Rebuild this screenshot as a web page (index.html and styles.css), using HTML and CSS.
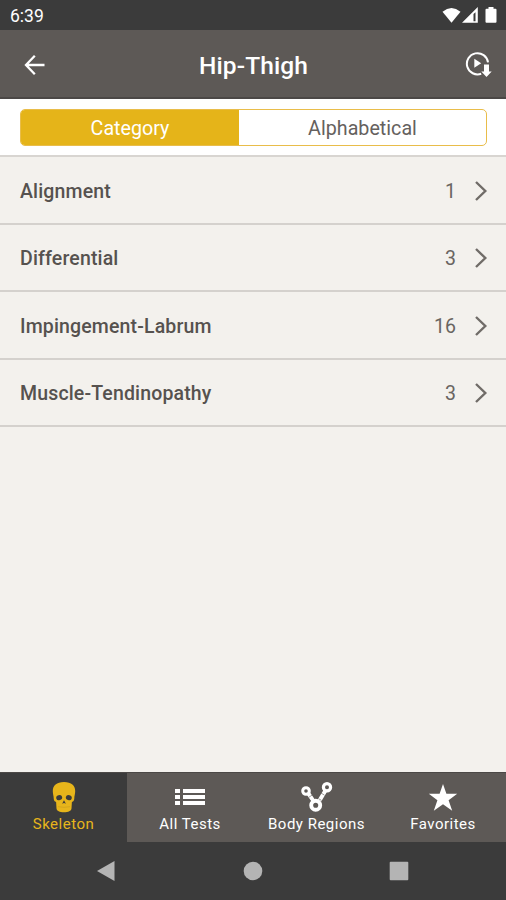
FILE: index.html
```
<!DOCTYPE html>
<html lang="en">
<head>
<meta charset="utf-8">
<title>Hip-Thigh</title>
<link rel="stylesheet" href="styles.css">
</head>
<body>
<div class="screen">
  <div class="status">
    <span class="time">6:39</span>
    <svg class="status-icons" width="56" height="18" viewBox="0 0 56 18" fill="#fff">
      <path d="M0.500 4.700Q9.500-2.600 18.500 4.700L9.500 15.800Z"/>
      <path fill-rule="evenodd" d="M20 15.800L35.800 0V15.800ZM31.500 7V14.300H33.500V5.200Z"/>
      <path d="M46.500 0h5v1.800h2q1 0 1 1v12q0 1-1 1h-9q-1 0-1-1v-12q0-1 1-1h2z"/>
    </svg>
  </div>
  <header class="header">
    <svg class="back" width="22" height="22" viewBox="0 0 22 22" fill="none" stroke="#fff" stroke-width="2.300"><path d="M10.800 1.800L2 11l8.800 9.200M2 11H20.500"/></svg>
    <h1 class="title">Hip-Thigh</h1>
    <svg class="download" width="28" height="28" viewBox="0 0 28 28">
      <path d="M16.200 22.700A10.600 10.600 0 1 1 23 11.400" fill="none" stroke="#fff" stroke-width="2"/>
      <path d="M9.300 7.800L16.200 12.300L9.300 16.800Z" fill="#fff"/>
      <path d="M19 13.500h5v7h2.700L21.500 26L16.300 20.500H19Z" fill="#fff"/>
    </svg>
  </header>
  <div class="filter">
    <div class="segments">
      <div class="segment active">Category</div>
      <div class="segment">Alphabetical</div>
    </div>
  </div>
  <main class="list">
    <div class="row"><span class="name">Alignment</span><span class="count">1</span><svg class="chevron" width="14" height="20" viewBox="0 0 14 20"><path d="M2 1l9.300 9L2 19"/></svg></div>
    <div class="row"><span class="name">Differential</span><span class="count">3</span><svg class="chevron" width="14" height="20" viewBox="0 0 14 20"><path d="M2 1l9.300 9L2 19"/></svg></div>
    <div class="row"><span class="name">Impingement-Labrum</span><span class="count">16</span><svg class="chevron" width="14" height="20" viewBox="0 0 14 20"><path d="M2 1l9.300 9L2 19"/></svg></div>
    <div class="row"><span class="name">Muscle-Tendinopathy</span><span class="count">3</span><svg class="chevron" width="14" height="20" viewBox="0 0 14 20"><path d="M2 1l9.300 9L2 19"/></svg></div>
  </main>
  <nav class="tabs">
    <div class="tab active">
      <svg width="34" height="32" viewBox="0 0 34 32">
        <path fill="#e7b51b" d="M17 1C9.500 1 5.800 4.500 5.800 10c0 3 .9 5 .9 7.300 0 2 .8 3.200 2.400 3.700l.4 6.500c.4 2.500 3 3.800 7.500 3.800s7.100-1.300 7.500-3.800l.4-6.500c1.600-.5 2.400-1.700 2.400-3.700 0-2.300.9-4.300.9-7.300C28.200 4.500 24.500 1 17 1Z"/>
        <g fill="#3b3b3b"><ellipse cx="12.200" cy="16.700" rx="3" ry="2.500" transform="rotate(-18 12.200 16.700)"/><ellipse cx="21.800" cy="16.700" rx="3" ry="2.500" transform="rotate(18 21.800 16.700)"/><path d="M17 19.300l1.900 3.400-1.900-.6-1.900.6Z"/></g>
        <path d="M11 25.700q6 1.200 12 0" fill="none" stroke="#c69b1c" stroke-width=".6"/>
      </svg>
      <span>Skeleton</span>
    </div>
    <div class="tab">
      <svg width="34" height="32" viewBox="0 0 34 32" fill="#fff"><path d="M2 8h5v4H2zM10 8h22v4H10zM2 14h5v4H2zM10 14h22v4H10zM2 20h5v4H2zM10 20h22v4H10z"/></svg>
      <span>All Tests</span>
    </div>
    <div class="tab">
      <svg width="34" height="32" viewBox="0 0 34 32" fill="none" stroke="#fff"><path stroke-width="4" d="M8.300 12.300L13.500 20M25.800 9L19.500 19.500"/><path stroke="#5d5956" stroke-width=".6" d="M9 16.200l3.600-2.500M21 12l3.500 2.200M13.300 19.600l2-1.600M18.800 17.800l2.700 1.600"/><circle cx="6" cy="10" r="3.300" stroke-width="3"/><circle cx="27" cy="6.300" r="3.600" stroke-width="3.200"/><circle cx="15.700" cy="24.300" r="4.500" stroke-width="3.900"/></svg>
      <span>Body Regions</span>
    </div>
    <div class="tab">
      <svg width="34" height="32" viewBox="0 0 34 32" fill="#fff"><path d="M17 3l3.400 9.800h10.800l-8.600 6.400 3.600 10.500L17 23.200l-9.200 6.500 3.600-10.500-8.600-6.400h10.800Z"/></svg>
      <span>Favorites</span>
    </div>
  </nav>
  <div class="system">
    <svg width="20" height="22" viewBox="0 0 20 22"><path d="M1 11L18.500 1v20Z"/></svg>
    <svg class="home" width="20" height="22" viewBox="0 0 20 22"><circle cx="10" cy="11" r="9.300"/></svg>
    <svg width="20" height="22" viewBox="0 0 20 22"><rect x=".7" y="1.700" width="18.600" height="18.600" rx="1"/></svg>
  </div>
</div>
</body>
</html>
```
FILE: styles.css
```
* { box-sizing: border-box; }
body { margin: 0; font-family: Roboto, "Liberation Sans", sans-serif; color: #56524f; }
svg { display: block; flex: none; }
.screen { width: 506px; height: 900px; display: flex; flex-direction: column; background: #f3f1ed; overflow: hidden; }
.status { height: 30px; flex: none; background: #3b3b3b; color: #fff; display: flex; justify-content: space-between; padding: 7px 8px 0 10px; }
.time { font-size: 17.500px; line-height: 18px; }
.header { height: 69px; flex: none; background: #5d5956; border-bottom: 2px solid #4b4846; display: grid; grid-template-columns: 60px 1fr 60px; align-items: center; color: #fff; }
.back { margin-left: 24px; margin-top: 2px; }
.title { margin: 0; text-align: center; font-size: 24.500px; font-weight: 500; line-height: 28px; letter-spacing: .1px; padding: 5px 0 0 1px; }
.download { margin: 3px 0 0 19px; }
.filter { height: 56px; flex: none; background: #fff; padding: 10px 19px 0 20px; }
.segments { height: 37px; display: grid; grid-template-columns: 218px 1fr; border: 1px solid #e9bd4a; border-radius: 5px; overflow: hidden; }
.segment { display: flex; align-items: center; justify-content: center; font-size: 19.700px; line-height: 24px; padding-top: 3px; color: #65615e; }
.segment.active { background: #e5b419; color: #fff; }
.list { flex: 1; border-top: 2px solid #d8d5d1; }
.row { height: 67.500px; border-bottom: 2px solid #d4d1cd; padding: 2px 18px 0 20px; display: flex; align-items: center; }
.name { flex: 1; font-size: 19.500px; font-weight: 500; line-height: 24px; letter-spacing: .15px; padding-top: 2px; }
.count { font-size: 19.500px; line-height: 24px; color: #696561; margin-right: 18px; padding-top: 2px; }
.chevron { fill: none; stroke: #706c68; stroke-width: 2.400; }
.tabs { height: 70px; flex: none; display: grid; grid-template-columns: 127px 126px 127px 126px; background: #5d5956; color: #fff; border-top: 1px solid #4b4846; }
.tab { display: flex; flex-direction: column; align-items: center; padding-top: 8px; font-size: 15px; line-height: 18px; letter-spacing: .5px; }
.tab span { margin-top: 2px; }
.tab.active { background: #3b3b3b; color: #e7b51b; }
.system { height: 58px; flex: none; background: #3b3b3b; display: flex; justify-content: space-between; padding: 18px 97px 0 96px; fill: #b4b4b4; }
.home { margin-left: 1px; }
```
